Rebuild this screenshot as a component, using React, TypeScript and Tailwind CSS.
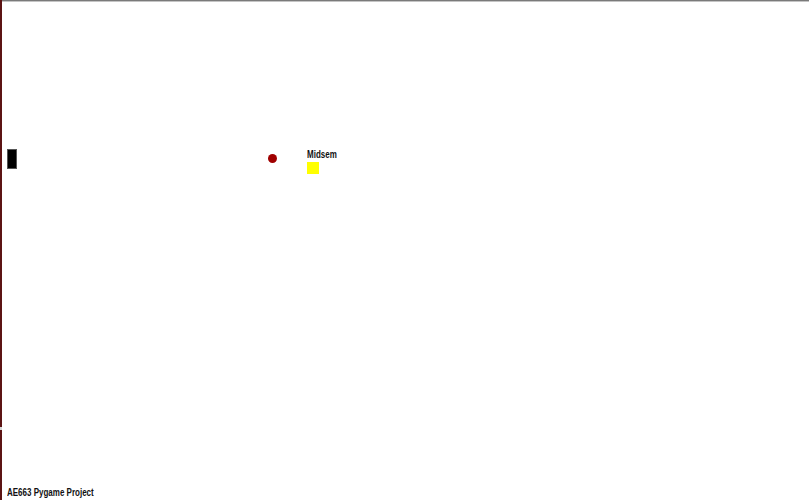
export default function App() {
  return (
    <div className="relative flex h-[500px] w-[809px] flex-col border-l-2 border-[#5c1414] bg-white font-['Liberation_Sans',Arial,sans-serif]">
      {/* window top edge */}
      <div className="h-[1px] bg-[#7a7a7a]" />
      <div className="h-[1px] bg-[#c4c4c4]" />

      {/* game canvas */}
      <div className="relative flex-1">
        {/* paddle */}
        <div className="absolute left-[5px] top-[147px] h-[20px] w-[10px] border border-[#555] bg-black" />

        {/* ball */}
        <div className="absolute left-[266px] top-[152px] h-[9px] w-[9px] rounded-full bg-[#a00000]" />

        {/* target */}
        <div className="absolute left-[305px] top-[147px] flex flex-col gap-[1px]">
          <span className="origin-left scale-x-[0.8] text-[10px] font-bold leading-[12px] text-[#111]">Midsem</span>
          <span className="h-[12px] w-[12px] bg-[#ffff00]" />
        </div>
      </div>

      <div className="px-[5px] pb-[1px]">
        <span className="block origin-left scale-x-[0.8] text-[10px] font-bold leading-[12px] text-[#111]">
          AE663 Pygame Project
        </span>
      </div>

      {/* resize notch on the frame edge */}
      <div className="absolute left-[-2px] top-[427px] h-[3px] w-[2px] bg-[#d8d8d8]" />
    </div>
  );
}
